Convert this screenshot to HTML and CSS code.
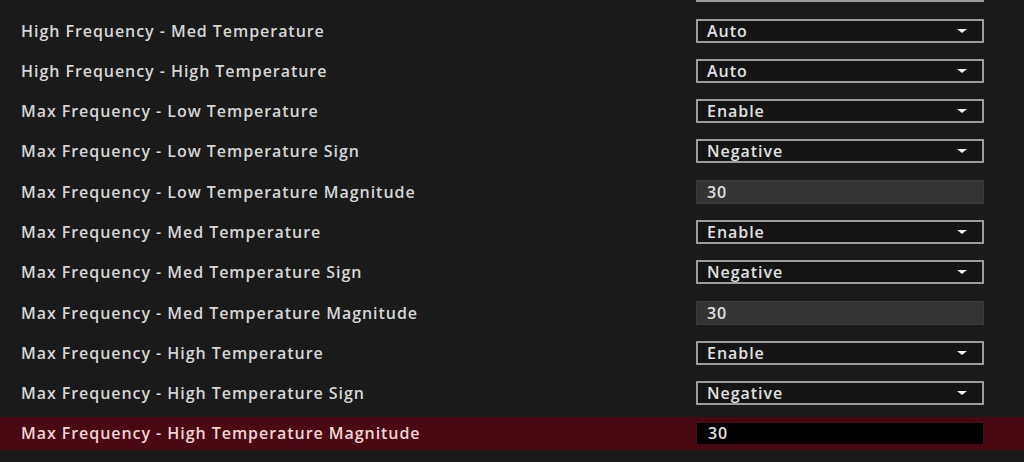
FILE: index.html
```html
<!DOCTYPE html>
<html>
<head>
<meta charset="utf-8">
<link rel="stylesheet" href="styles.css">
</head>
<body>
<div class="list">
  <div class="row"><span class="label"></span><div class="select"><span></span><i class="arrow"></i></div></div>
  <div class="row"><span class="label">High Frequency - Med Temperature</span><div class="select"><span>Auto</span><i class="arrow"></i></div></div>
  <div class="row"><span class="label">High Frequency - High Temperature</span><div class="select"><span>Auto</span><i class="arrow"></i></div></div>
  <div class="row"><span class="label">Max Frequency - Low Temperature</span><div class="select"><span>Enable</span><i class="arrow"></i></div></div>
  <div class="row"><span class="label">Max Frequency - Low Temperature Sign</span><div class="select"><span>Negative</span><i class="arrow"></i></div></div>
  <div class="row"><span class="label">Max Frequency - Low Temperature Magnitude</span><div class="input"><span>30</span></div></div>
  <div class="row"><span class="label">Max Frequency - Med Temperature</span><div class="select"><span>Enable</span><i class="arrow"></i></div></div>
  <div class="row"><span class="label">Max Frequency - Med Temperature Sign</span><div class="select"><span>Negative</span><i class="arrow"></i></div></div>
  <div class="row"><span class="label">Max Frequency - Med Temperature Magnitude</span><div class="input"><span>30</span></div></div>
  <div class="row"><span class="label">Max Frequency - High Temperature</span><div class="select"><span>Enable</span><i class="arrow"></i></div></div>
  <div class="row"><span class="label">Max Frequency - High Temperature Sign</span><div class="select"><span>Negative</span><i class="arrow"></i></div></div>
  <div class="row active"><span class="label">Max Frequency - High Temperature Magnitude</span><div class="input"><span>30</span></div></div>
</div>
</body>
</html>
```
FILE: styles.css
```css
html, body {
  margin: 0;
  padding: 0;
  background: #1a1a1a;
  overflow: hidden;
  height: 462px;
}
body {
  font-family: "Open Sans", "DejaVu Sans", sans-serif;
  font-weight: 600;
  font-size: 16px;
  letter-spacing: 0.95px;
  color: #d6d6d6;
}
.list {
  display: flex;
  flex-direction: column;
  gap: 7.3px;
  margin-top: -26.3px;
}
.row {
  height: 33px;
  display: flex;
  align-items: center;
  justify-content: space-between;
  padding-left: 21px;
  padding-right: 40px;
}
.select, .input {
  width: 288px;
  height: 24px;
  box-sizing: border-box;
  display: flex;
  align-items: center;
  justify-content: space-between;
  padding: 0 15px 0 9px;
  color: #e0e0e0;
}
.select {
  border: 2px solid #9c9c9c;
  background: #141414;
}
.input {
  background: #343434;
  border: 1px solid #3c3c3c;
  padding-left: 10px;
}
.arrow {
  width: 0;
  height: 0;
  border-left: 5px solid transparent;
  border-right: 5px solid transparent;
  border-top: 4px solid #f0f0f0;
}
.row.active {
  background: #4a0812;
}
.row.active .label {
  color: #f2d4d6;
}
.row.active .input {
  background: #000;
  border: none;
  height: 21px;
  width: 286px;
  margin-right: 1px;
  padding-left: 11px;
}
```
